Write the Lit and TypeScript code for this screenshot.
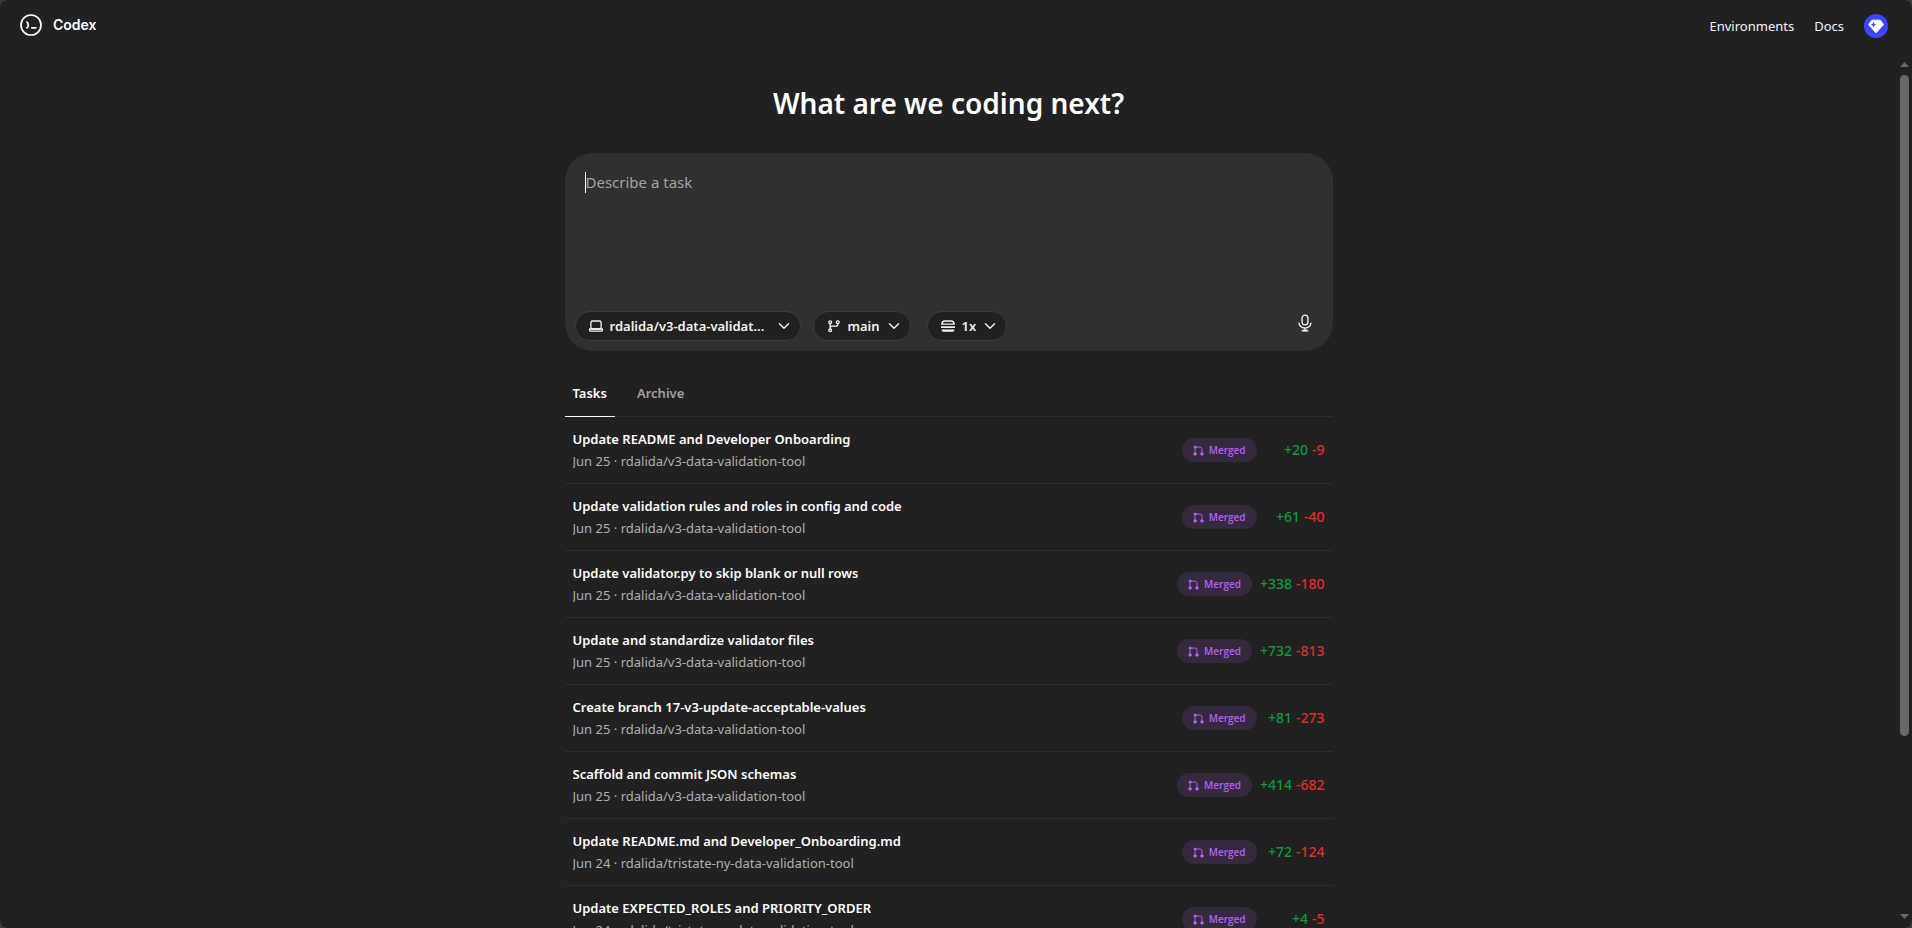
import { LitElement, html, css, svg } from "lit";
import { customElement, state } from "lit/decorators.js";
import { classMap } from "lit/directives/class-map.js";

interface Task {
  title: string;
  date: string;
  repo: string;
  added: number;
  removed: number;
}

const V3 = "rdalida/v3-data-validation-tool";
const TRISTATE = "rdalida/tristate-ny-data-validation-tool";

const TASKS: Task[] = [
  { title: "Update README and Developer Onboarding", date: "Jun 25", repo: V3, added: 20, removed: 9 },
  { title: "Update validation rules and roles in config and code", date: "Jun 25", repo: V3, added: 61, removed: 40 },
  { title: "Update validator.py to skip blank or null rows", date: "Jun 25", repo: V3, added: 338, removed: 180 },
  { title: "Update and standardize validator files", date: "Jun 25", repo: V3, added: 732, removed: 813 },
  { title: "Create branch 17-v3-update-acceptable-values", date: "Jun 25", repo: V3, added: 81, removed: 273 },
  { title: "Scaffold and commit JSON schemas", date: "Jun 25", repo: V3, added: 414, removed: 682 },
  { title: "Update README.md and Developer_Onboarding.md", date: "Jun 24", repo: TRISTATE, added: 72, removed: 124 },
  { title: "Update EXPECTED_ROLES and PRIORITY_ORDER", date: "Jun 24", repo: TRISTATE, added: 4, removed: 5 },
];

const icon = (size: number, body: unknown, width = 1.3) => html`<svg
  width=${size} height=${size} viewBox="0 0 16 16" fill="none" stroke="currentColor"
  stroke-width=${width} stroke-linecap="round" stroke-linejoin="round" aria-hidden="true">${body}</svg>`;

const laptop = svg`<rect x="2.9" y="3" width="10.2" height="8" rx="1.4"/><path d="M1.6 11h12.8v.9a1.200 1.200 0 0 1-1.200 1.200H2.800a1.200 1.200 0 0 1-1.200-1.200z"/>`;
const branch = svg`<circle cx="4.200" cy="4.200" r="1.400"/><circle cx="11.800" cy="4.200" r="1.400"/><circle cx="4.200" cy="12.200" r="1.400"/><path d="M4.200 5.600v5.200M11.800 5.600v.6a2 2 0 0 1-2 2H6.200a2 2 0 0 0-2 2"/>`;
const stack = svg`<path d="M4.800 3h6.400c1.700 0 2.900 1.200 3.100 3.200H1.700C1.900 4.200 3.100 3 4.800 3z"/><path d="M1.800 9.200h12.400" stroke-width="1.700"/><path d="M2.200 12.200h11.600l-1.200 1H3.400z"/>`;
const chevron = svg`<path d="M2.800 5.400 8 10.600l5.200-5.200"/>`;
const mic = svg`<rect x="5.400" y="1" width="5.200" height="8.600" rx="2.600"/><path d="M2.700 8.200a5.400 5.400 0 0 0 10.600 0M8 12.400v2.400"/><path d="M5.900 14.800h4.200" stroke-width="1.700"/>`;
const merge = svg`<g fill="currentColor"><circle cx="3" cy="3" r="1.500"/><circle cx="3" cy="13" r="1.800"/><circle cx="13" cy="13" r="1.800"/></g><path d="M3 3v10M3 3h7.400a2.600 2.600 0 0 1 2.600 2.600V13"/>`;

@customElement("app-picker")
export class AppPicker extends LitElement {
  static properties = {
    label: { type: String },
    value: { type: String },
    glyph: { attribute: false },
  };
  declare label: string;
  declare value: string;
  declare glyph: unknown;

  static styles = css`
    :host { display: block; }
    .pill {
      display: flex;
      align-items: center;
      gap: 6px;
      height: 30px;
      box-sizing: border-box;
      padding: 0 9px 0 12px;
      border: 1px solid #3d3d3d;
      border-radius: 15px;
      background: #212121;
      color: #f3f3f3;
    }
    svg { display: block; flex: none; }
    select {
      flex: 1;
      appearance: none;
      border: 0;
      margin: 0;
      padding: 0;
      background: none;
      color: inherit;
      font: 600 13px/20px "Noto Sans", "Open Sans", sans-serif;
    }
    select:focus { outline: none; }
    .pill:focus-within { border-color: #8f8f8f; }
  `;

  render() {
    return html`<label class="pill">
      ${icon(16, this.glyph)}
      <select aria-label=${this.label}><option>${this.value}</option></select>
      ${icon(14, chevron, 1.6)}
    </label>`;
  }
}

@customElement("task-row")
export class TaskRow extends LitElement {
  static properties = { task: { attribute: false } };
  declare task: Task;

  static styles = css`
    :host { display: block; border-bottom: 1px solid #2f2f2f; }
    .row {
      display: flex;
      align-items: center;
      justify-content: space-between;
      gap: 16px;
      height: 66px;
      padding: 0 8px;
      color: inherit;
      text-decoration: none;
    }
    .row:hover { background: #262626; }
    .text { display: grid; gap: 2px; min-width: 0; padding-bottom: 1px; }
    .title, .meta { overflow: hidden; white-space: nowrap; text-overflow: ellipsis; line-height: 20px; }
    .title { font-size: 13px; font-weight: 600; color: #fff; }
    .meta { font-size: 13px; color: #afafaf; }
    .side { display: flex; align-items: center; gap: 8px; flex: none; }
    .badge {
      display: flex;
      align-items: center;
      gap: 5px;
      height: 24px;
      padding: 0 11px;
      border-radius: 12px;
      background: #35293d;
      color: #b560f5;
      font: 600 10px/16px "Open Sans", "Noto Sans", sans-serif;
    }
    .diff { display: flex; justify-content: flex-end; gap: 4px; min-width: 60px; font-size: 14px; line-height: 20px; font-weight: 500; }
    .added { color: #0d9b3e; }
    .removed { color: #e02e2a; }
    svg { display: block; }
  `;

  render() {
    const t = this.task;
    return html`<a class="row" href="#">
      <span class="text">
        <span class="title">${t.title}</span>
        <span class="meta">${t.date} · ${t.repo}</span>
      </span>
      <span class="side">
        <span class="badge">${icon(11, merge, 1.4)}<span>Merged</span></span>
        <span class="diff"><span class="added">+${t.added}</span><span class="removed">-${t.removed}</span></span>
      </span>
    </a>`;
  }
}

@customElement("app-root")
export class AppRoot extends LitElement {
  @state() private tab = "Tasks";

  static styles = css`
    :host {
      display: block;
      height: 100vh;
      background: #3c3c3c;
      color: #fff;
      font-family: "Noto Sans", "Open Sans", sans-serif;
    }
    .window {
      display: flex;
      flex-direction: column;
      height: 100%;
      border-radius: 8px;
      overflow: hidden;
      background: #212121;
    }
    .header {
      display: flex;
      align-items: center;
      justify-content: space-between;
      flex: none;
      height: 52px;
      box-sizing: border-box;
      padding: 0 24px 0 20px;
    }
    .brand {
      display: flex;
      align-items: center;
      gap: 11px;
      padding-bottom: 2px;
      color: #fff;
      text-decoration: none;
      font: 600 14px/20px Inter, sans-serif;
    }
    .nav { display: flex; align-items: center; gap: 20px; font-size: 13px; }
    .nav a { color: #f3f3f3; text-decoration: none; }
    .avatar {
      display: block;
      width: 24px;
      height: 24px;
      padding: 0;
      border: 0;
      border-radius: 50%;
      background: #3c46ff;
    }
    svg { display: block; }
    .body { display: flex; flex: 1; min-height: 0; }
    .scroll { flex: 1; min-width: 0; overflow-y: auto; scrollbar-width: none; }
    .content { max-width: 768px; margin: 0 auto; padding: 31px 16px 0; }
    h1 { margin: 0 0 30px; text-align: center; font-size: 28px; line-height: 40px; font-weight: 600; }
    .composer {
      display: flex;
      flex-direction: column;
      height: 198px;
      box-sizing: border-box;
      padding: 16px 10px 10px;
      border-radius: 28px;
      background: #303030;
    }
    .prompt { position: relative; flex: 1; margin: 0 10px; }
    .caret { position: absolute; left: 0; top: 3px; width: 1px; height: 21px; background: #fff; }
    textarea {
      display: block;
      width: 100%;
      height: 100%;
      box-sizing: border-box;
      padding: 0 0 0 1px;
      border: 0;
      resize: none;
      outline: none;
      background: none;
      color: #fff;
      caret-color: transparent;
      font: 15px/26px "Noto Sans", "Open Sans", sans-serif;
    }
    textarea::placeholder { color: #a3a3a3; opacity: 1; }
    .tools { display: flex; align-items: center; gap: 12px; }
    .environment { min-width: 226px; }
    .count { margin-left: 4px; }
    .mic {
      margin-left: auto;
      display: grid;
      place-items: center;
      width: 36px;
      height: 30px;
      padding: 0 0 6px;
      border: 0;
      background: none;
      color: #f3f3f3;
    }
    .tabs { display: flex; gap: 14px; margin-top: 18px; border-bottom: 1px solid #2f2f2f; }
    .tab {
      height: 48px;
      margin-bottom: -1px;
      padding: 0 8px;
      border: 0;
      border-bottom: 1px solid transparent;
      background: none;
      color: #a3a3a3;
      font: 600 13px/20px "Noto Sans", "Open Sans", sans-serif;
    }
    .tab.active { color: #fff; border-bottom-color: #fff; }
    .list { list-style: none; margin: 0; padding: 0; }
    .bar {
      display: flex;
      flex-direction: column;
      align-items: center;
      flex: none;
      width: 15px;
      box-sizing: border-box;
      padding: 10px 3px 9px;
    }
    .track { display: flex; flex-direction: column; flex: 1; width: 9px; margin: 8px 0; }
    .thumb { flex: 159; border-radius: 5px; background: #686868; }
    .rest { flex: 41; }
  `;

  render() {
    return html`<div class="window">
      <header class="header">
        <a class="brand" href="#">
          <svg width="22" height="22" viewBox="0 0 22 22" fill="none" stroke="#fff" stroke-width="1.7" stroke-linecap="round" stroke-linejoin="round" aria-hidden="true">
            <circle cx="11" cy="11" r="10"/>
            <path d="M7 8.200c1.700 1.600 1.700 3.900 0 5.600M11.800 13.800h4"/>
          </svg>
          <span>Codex</span>
        </a>
        <nav class="nav">
          <a href="#">Environments</a>
          <a href="#">Docs</a>
          <button class="avatar" aria-label="Account">
            <svg width="24" height="24" viewBox="0 0 24 24" aria-hidden="true">
              <path fill="#fff" d="M8 6.200h8.200l3.300 4.300L12 18.800 4.500 10.500z" stroke="#fff" stroke-linejoin="round"/>
              <path fill="#3c46ff" d="M9.500 7.800l.8 2 2 .8-2 .8-.8 2-.8-2-2-.8 2-.8z"/>
            </svg>
          </button>
        </nav>
      </header>
      <div class="body">
        <main class="scroll">
          <div class="content">
            <h1>What are we coding next?</h1>
            <form class="composer" @submit=${(e: Event) => e.preventDefault()}>
              <div class="prompt">
                <textarea aria-label="Describe a task" placeholder="Describe a task"></textarea>
                <span class="caret"></span>
              </div>
              <div class="tools">
                <app-picker class="environment" label="Environment" value="rdalida/v3-data-validat..." .glyph=${laptop}></app-picker>
                <app-picker label="Branch" value="main" .glyph=${branch}></app-picker>
                <app-picker class="count" label="Versions" value="1x" .glyph=${stack}></app-picker>
                <button type="button" class="mic" aria-label="Dictate">${icon(18, mic, 1.2)}</button>
              </div>
            </form>
            <div class="tabs" role="tablist">
              ${["Tasks", "Archive"].map(
                (name) => html`<button
                  role="tab"
                  aria-selected=${this.tab === name}
                  class=${classMap({ tab: true, active: this.tab === name })}
                  @click=${() => (this.tab = name)}
                >${name}</button>`
              )}
            </div>
            <ul class="list">
              ${TASKS.map((task) => html`<li><task-row .task=${task}></task-row></li>`)}
            </ul>
          </div>
        </main>
        <div class="bar" aria-hidden="true">
          <svg width="9" height="5" viewBox="0 0 9 5"><path fill="#686868" d="M0 5 4.500 0 9 5z"/></svg>
          <div class="track"><div class="thumb"></div><div class="rest"></div></div>
          <svg width="9" height="5" viewBox="0 0 9 5"><path fill="#686868" d="M0 0h9L4.500 5z"/></svg>
        </div>
      </div>
    </div>`;
  }
}
